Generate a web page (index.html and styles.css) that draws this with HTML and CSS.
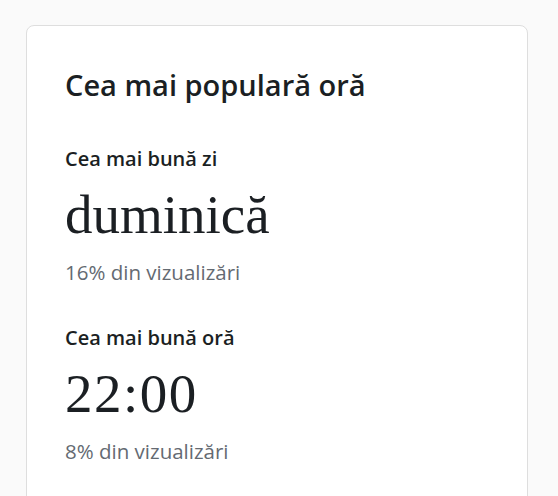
FILE: index.html
```html
<!DOCTYPE html>
<html lang="ro">
<head>
<meta charset="utf-8">
<link rel="stylesheet" href="styles.css">
</head>
<body>
<div class="card">
  <h2 class="title">Cea mai populară oră</h2>
  <div class="stats">
    <div class="stat">
      <div class="label">Cea mai bună zi</div>
      <div class="value">duminică</div>
      <div class="sub">16% din vizualizări</div>
    </div>
    <div class="stat">
      <div class="label">Cea mai bună oră</div>
      <div class="value value-time">22:00</div>
      <div class="sub">8% din vizualizări</div>
    </div>
  </div>
</div>
</body>
</html>
```
FILE: styles.css
```css
html, body {
  margin: 0;
  padding: 0;
  background: #fafafa;
}
body {
  font-family: "Open Sans", "Noto Sans", sans-serif;
  color: #1b1f23;
  padding: 25px 30px 0 26px;
}
.card {
  width: 502px;
  height: 520px;
  background: #ffffff;
  border: 1px solid #dedede;
  border-radius: 8px;
  padding: 41px 38px 0 38px;
  box-sizing: border-box;
}
.title {
  margin: 0;
  font-size: 29px;
  line-height: 36px;
  font-weight: 600;
  color: #1b1f23;
}
.stats {
  display: flex;
  flex-direction: column;
  gap: 40px;
  margin-top: 43px;
}
.stat {
  display: flex;
  flex-direction: column;
}
.label {
  font-size: 20px;
  line-height: 26px;
  font-weight: 600;
  color: #1b1f23;
}
.value {
  font-family: "Liberation Serif", serif;
  font-size: 55px;
  line-height: 64px;
  margin-top: 11px;
  color: #1b1f23;
}
.value-time {
  letter-spacing: 1.5px;
}
.sub {
  font-size: 20.5px;
  line-height: 26px;
  margin-top: 12px;
  color: #646a72;
}
```
